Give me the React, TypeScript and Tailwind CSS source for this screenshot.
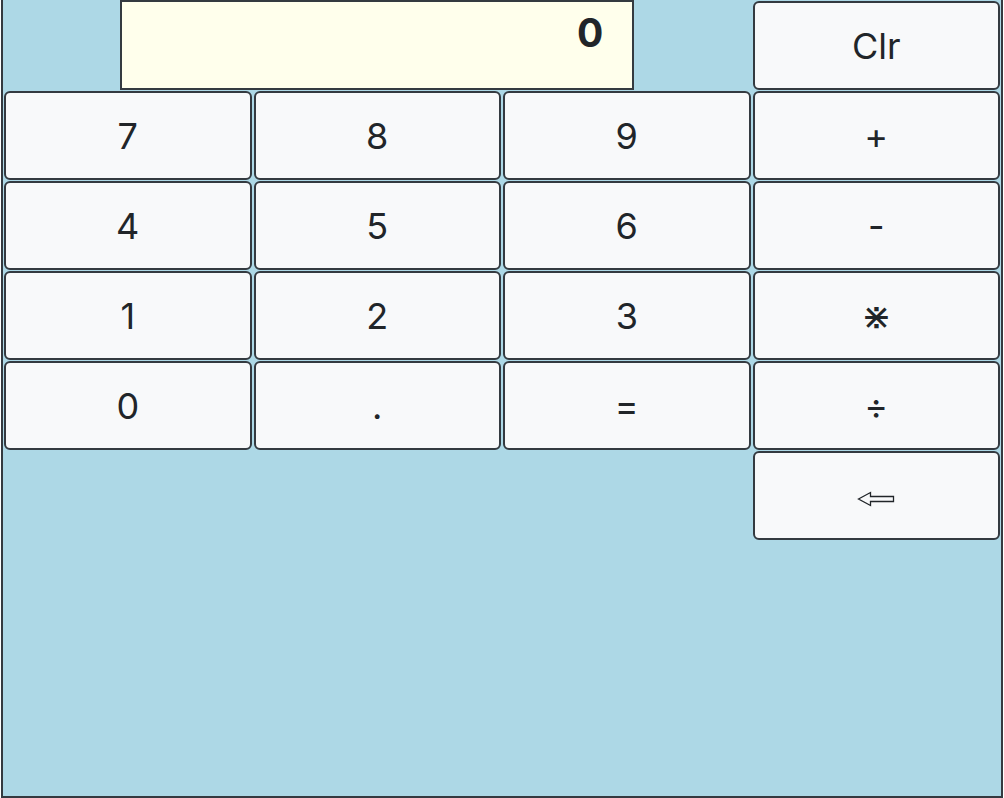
import React from "react";

const btn =
  "mx-px mt-px h-[89px] flex items-center justify-center rounded-[6px] border-2 border-[#343a40] bg-[#f8f9fa] text-[36px] text-[#212529] leading-none";

export default function App() {
  const rows: string[][] = [
    ["7", "8", "9", "+"],
    ["4", "5", "6", "-"],
    ["1", "2", "3", "⋇"],
    ["0", ".", "=", "÷"],
  ];
  return (
    <div
      className="ml-px h-[798px] w-[1002px] border-x-2 border-b-2 border-[#343a40] bg-[#add8e6]"
      style={{ fontFamily: "Inter, 'Noto Sans', 'DejaVu Sans', sans-serif" }}
    >
      <div className="grid grid-cols-4 auto-rows-[90px]">
        <div className="col-span-3 flex justify-center">
          <div className="flex h-[90px] w-[514px] justify-end border-2 border-[#343a40] bg-[#ffffec] pr-[29px] pt-[11px] text-[39px] font-bold leading-none text-[#212529]">
            0
          </div>
        </div>
        <button className={btn}>Clr</button>
        {rows.map((r, i) =>
          r.map((k, j) => (
            <button key={`${i}-${j}`} className={btn}>
              {k}
            </button>
          ))
        )}
        <div className="col-span-3" />
        <button className={btn}>
          <svg width="38" height="16" viewBox="0 0 38 16" className="mt-[6px]">
            <path
              d="M1.5 8 L13.5 1.5 L13.5 5.5 L36.5 5.5 L36.5 10.5 L13.5 10.5 L13.5 14.5 Z"
              fill="none"
              stroke="#212529"
              strokeWidth="1.3"
              strokeLinejoin="miter"
            />
          </svg>
        </button>
      </div>
    </div>
  );
}
